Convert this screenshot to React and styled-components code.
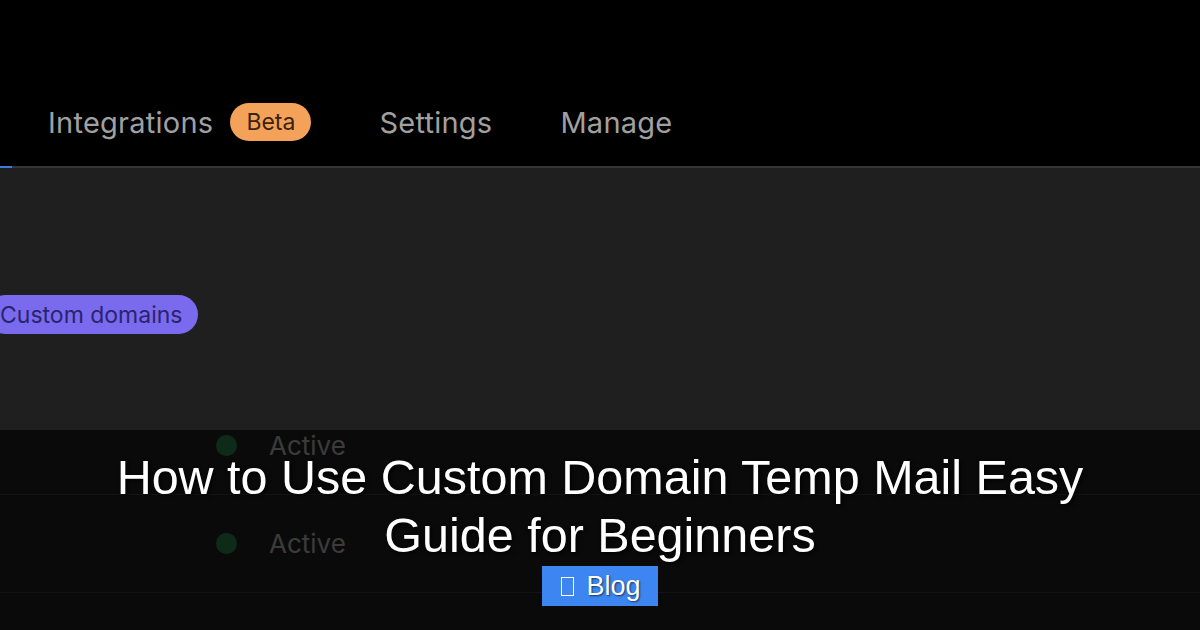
import React from "react";
import styled, { createGlobalStyle } from "styled-components";

const GlobalStyle = createGlobalStyle`
  html, body {
    margin: 0;
    padding: 0;
    background: #000000;
  }
  * {
    box-sizing: border-box;
  }
`;

// whole frame
const Frame = styled.div`
  position: relative;
  width: 1200px;
  height: 630px;
  overflow: hidden;
  display: flex;
  flex-direction: column;
  background: #1f1f1f;
  font-family: Inter, "Noto Sans", sans-serif;
`;

// top tab bar
const TabBar = styled.nav`
  position: relative;
  height: 168px;
  flex-shrink: 0;
  display: flex;
  align-items: center;
  gap: 68px;
  padding: 78px 0 0 48px;
  background: #000000;
  border-bottom: 2px solid #353535;
`;

// end of the selected tab's underline, the tab itself is cut off
const ActiveMarker = styled.span`
  position: absolute;
  left: 0;
  bottom: -2px;
  width: 12px;
  height: 2px;
  background: #3b7ddd;
`;

const Tab = styled.div`
  display: flex;
  align-items: center;
  gap: 17px;
  font-size: 29px;
  color: #a0a0a0;
  letter-spacing: 0.25px;
`;

const Badge = styled.span`
  display: inline-flex;
  align-items: center;
  height: 38px;
  padding: 0 16px;
  border-radius: 19px;
  background: #f4a25a;
  color: #3a2410;
  font-size: 23px;
  letter-spacing: 0;
`;

// content under the tabs
const Body = styled.div`
  flex: 1;
  display: flex;
  flex-direction: column;
`;

const FilterRow = styled.div`
  display: flex;
  padding-top: 127px;
  margin-left: -14px;
`;

const FilterPill = styled.span`
  display: inline-flex;
  align-items: center;
  height: 39px;
  padding: 0 16px 0 14px;
  border-radius: 20px;
  background: #7a6aee;
  color: #29246e;
  font-size: 23px;
`;

const Table = styled.div`
  margin-top: 63px;
  display: flex;
  flex-direction: column;
`;

const Row = styled.div`
  height: 98px;
  display: flex;
  align-items: center;
  gap: 32px;
  padding-left: 216px;
  border-bottom: 1px solid #3a3a3a;
`;

const StatusDot = styled.span`
  width: 21px;
  height: 21px;
  border-radius: 50%;
  background: #2a7a48;
`;

const StatusText = styled.span`
  font-size: 26px;
  color: #a8a8a8;
`;

// caption overlay over the lower part
const Overlay = styled.div`
  position: absolute;
  left: 0;
  right: 0;
  bottom: 0;
  height: 200px;
  display: flex;
  flex-direction: column;
  align-items: center;
  padding-top: 18px;
  background: rgba(0, 0, 0, 0.65);
`;

const Title = styled.h1`
  margin: 0;
  width: 1000px;
  text-align: center;
  font-family: "Liberation Sans", Arial, sans-serif;
  font-weight: 400;
  font-size: 48.5px;
  line-height: 58px;
  color: #ffffff;
  text-shadow: 2px 2px 4px rgba(0, 0, 0, 0.8);
`;

const Category = styled.span`
  margin-top: 2px;
  display: inline-flex;
  align-items: center;
  gap: 12px;
  height: 40px;
  padding: 0 17px 0 19px;
  background: #3d85f0;
  color: #ffffff;
  font-family: "Liberation Sans", Arial, sans-serif;
  font-size: 27px;
  text-shadow: 1px 1px 2px rgba(0, 0, 0, 0.6);
`;

const MissingGlyph = styled.span`
  width: 13px;
  height: 19px;
  border: 1.5px solid #ffffff;
`;

const App = () => {
  return (
    <>
      <GlobalStyle />
      <Frame>
        <TabBar>
          <ActiveMarker />
          <Tab>
            Integrations <Badge>Beta</Badge>
          </Tab>
          <Tab>Settings</Tab>
          <Tab>Manage</Tab>
        </TabBar>
        <Body>
          <FilterRow>
            <FilterPill>Custom domains</FilterPill>
          </FilterRow>
          <Table>
            <Row>
              <StatusDot />
              <StatusText>Active</StatusText>
            </Row>
            <Row>
              <StatusDot />
              <StatusText>Active</StatusText>
            </Row>
          </Table>
        </Body>
        <Overlay>
          <Title>How to Use Custom Domain Temp Mail Easy Guide for Beginners</Title>
          <Category>
            <MissingGlyph />
            Blog
          </Category>
        </Overlay>
      </Frame>
    </>
  );
};

export default App;
